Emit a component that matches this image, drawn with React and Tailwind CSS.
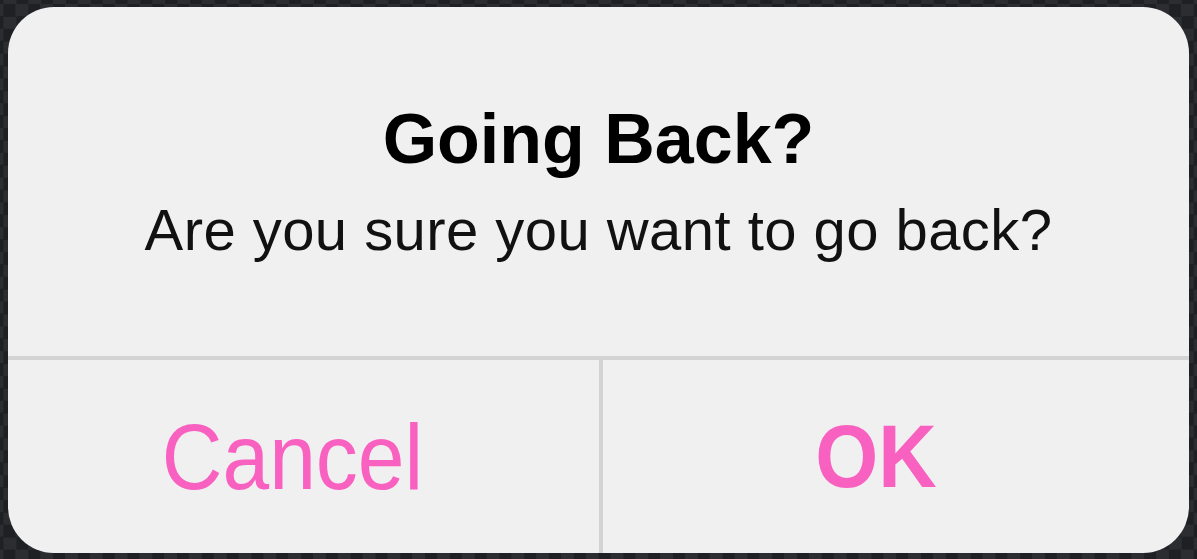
export default function App() {
  return (
    <div
      className="w-[1197px] h-[559px] overflow-hidden bg-[repeating-conic-gradient(#2c2d31_0_25%,#1e2024_0_50%)] bg-[length:24.8px_24.8px] bg-[position:3.5px_4px] pt-[7px] pl-[8px] pr-[8px] pb-[6px]"
      style={{ fontFamily: '"Liberation Sans", Arial, sans-serif' }}
    >
      <div className="w-full h-full rounded-[46px] bg-[#f0f0f0] flex flex-col overflow-hidden">
        <div className="h-[353px] shrink-0 flex flex-col items-center pt-[97px] border-b-[4px] border-[#d3d3d3]">
          <div className="text-[70px] leading-[70px] font-bold text-black">Going Back?</div>
          <div className="mt-[27px] text-[58px] leading-[58px] tracking-[0.45px] text-[#111111]">
            Are you sure you want to go back?
          </div>
        </div>
        <div className="flex-1 flex">
          <div className="w-[591px] flex items-center justify-center pr-[22px]">
            <span className="text-[84px] leading-[84px] text-[#f961c1] scale-y-[1.1] inline-block">Cancel</span>
          </div>
          <div className="w-[4px] bg-[#d3d3d3]"></div>
          <div className="flex-1 flex items-center justify-center pr-[40px]">
            <span className="text-[81px] leading-[81px] font-bold text-[#f961c1] scale-y-[1.1] inline-block">OK</span>
          </div>
        </div>
      </div>
    </div>
  );
}
